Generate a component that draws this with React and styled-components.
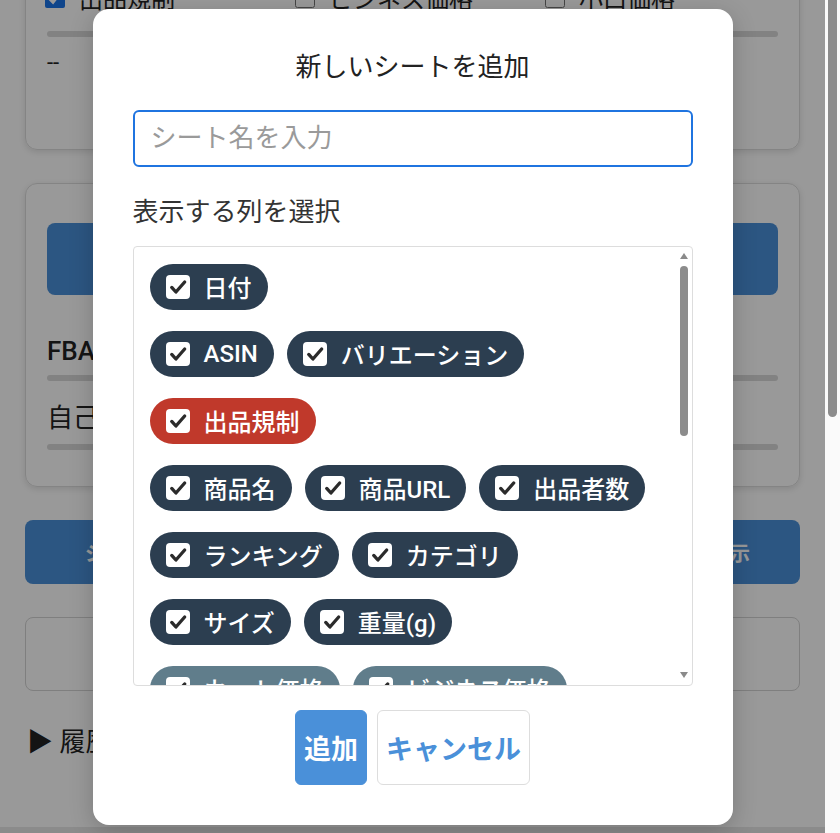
import styled, { createGlobalStyle } from "styled-components";

const GlobalStyle = createGlobalStyle`
  body {
    margin: 0;
    background: #fff;
    color: #222;
    font-family: Roboto, "Noto Sans CJK JP", "Noto Sans", sans-serif;
  }
`;

const Shell = styled.div`
  height: 100vh;
  display: flex;
  overflow: hidden;
`;

const Viewport = styled.div`
  flex: 1;
  position: relative;
  overflow: hidden;
`;

const PageScrollTrack = styled.div`
  width: 15px;
  flex-shrink: 0;
  background: #fafafa;
  padding: 0 3px;
  box-sizing: border-box;
`;

const PageScrollThumb = styled.div`
  height: 417px;
  background: #8c8c8c;
  border-radius: 0 0 5px 5px;
`;

const Page = styled.div`
  margin-top: -41px;
  padding: 0 25px;
  display: flex;
  flex-direction: column;
  gap: 33px;
`;

const Card = styled.section`
  border: 1px solid #dcdcdc;
  border-radius: 12px;
  box-shadow: 0 2px 6px rgba(0, 0, 0, 0.12);
  padding: ${(p) => p.$pad};
`;

const CheckGrid = styled.div`
  display: grid;
  grid-template-columns: repeat(3, 250px);
  height: 34px;
  align-items: center;
  margin-left: -2px;
`;

const CheckOption = styled.label`
  display: flex;
  align-items: center;
  gap: 14px;
  font-size: 24px;
  input {
    width: 20px;
    height: 20px;
    margin: 0;
    accent-color: #1a73e8;
  }
`;

const Bar = styled.div`
  height: 6px;
  border-radius: 3px;
  background: #d9d9d9;
  margin-top: ${(p) => p.$top}px;
`;

const Value = styled.div`
  margin-top: 10px;
  font-size: 22px;
  line-height: 31px;
`;

const PrimaryWide = styled.button`
  width: 100%;
  height: ${(p) => p.$h}px;
  border: none;
  border-radius: 8px;
  background: #4a90d9;
  color: #fff;
  font-family: inherit;
  font-size: 20px;
  font-weight: 700;
`;

const FieldLabel = styled.div`
  margin-top: ${(p) => p.$top}px;
  font-size: 26px;
  line-height: 31px;
  font-weight: ${(p) => (p.$bold ? 500 : 400)};
`;

const ButtonRow = styled.div`
  display: flex;
  gap: 16px;
`;

const EmptyBox = styled.div`
  height: 74px;
  border: 1px solid #d4d4d4;
  border-radius: 8px;
  box-sizing: border-box;
`;

const HistoryToggle = styled.div`
  padding: 0 0 34px 2px;
  font-size: 26px;
  line-height: 36px;
`;

const Footer = styled.footer`
  height: 60px;
  margin: 0 -25px;
  background: #e8e8e8;
  padding-top: 3px;
  display: flex;
  justify-content: center;
  gap: 24px;
  font-size: 17px;
  color: #333;
`;

const Overlay = styled.div`
  position: absolute;
  inset: 0;
  background: rgba(0, 0, 0, 0.4);
  display: flex;
  align-items: center;
  justify-content: center;
`;

const Dialog = styled.div`
  width: 640px;
  height: 816px;
  box-sizing: border-box;
  padding: 40px;
  background: #fff;
  border-radius: 16px;
  box-shadow: 0 6px 24px rgba(0, 0, 0, 0.2);
  display: flex;
  flex-direction: column;
`;

const Title = styled.h2`
  margin: 0 0 25px;
  text-align: center;
  font-size: 26px;
  line-height: 36px;
  font-weight: 400;
  color: #222;
`;

const NameInput = styled.input`
  height: 57px;
  box-sizing: border-box;
  border: 2px solid #1f74e0;
  border-radius: 6px;
  padding: 0 16px;
  font-family: inherit;
  font-size: 26px;
  color: #222;
  outline: none;
  &::placeholder {
    color: #9a9a9a;
  }
`;

const SectionLabel = styled.div`
  margin: 27px 0 16px;
  font-size: 26px;
  line-height: 36px;
  color: #333;
`;

const ColumnList = styled.div`
  height: 440px;
  box-sizing: border-box;
  border: 1px solid #dddddd;
  border-radius: 4px;
  display: flex;
`;

const ListContent = styled.div`
  flex: 1;
  overflow: hidden;
  padding: 17px 16px;
  display: flex;
  flex-direction: column;
  gap: 21px;
`;

const ListScrollbar = styled.div`
  width: 15px;
  flex-shrink: 0;
  display: flex;
  flex-direction: column;
  align-items: center;
  padding: 6px 0 7px;
  box-sizing: border-box;
`;

const Arrow = styled.span`
  width: 0;
  height: 0;
  border-left: 4.5px solid transparent;
  border-right: 4.5px solid transparent;
  ${(p) =>
    p.$down
      ? "border-top: 6px solid #8a8a8a; margin-top: auto;"
      : "border-bottom: 6px solid #8a8a8a;"}
`;

const ListThumb = styled.div`
  width: 8px;
  height: 170px;
  margin-top: 7px;
  border-radius: 4px;
  background: #8c8c8c;
`;

const Group = styled.div`
  display: flex;
  flex-wrap: wrap;
  gap: 21px 13px;
`;

const tones = {
  navy: "#2c3e50",
  red: "#c0392b",
  slate: "#607d8b",
  green: "#2e8b57",
  purple: "#7d4a9e",
  orange: "#d35400",
};

const Chip = styled.label`
  display: inline-flex;
  align-items: center;
  gap: 14px;
  height: 46px;
  padding: 0 16px;
  border-radius: 23px;
  background: ${(p) => tones[p.$tone]};
  color: #fff;
  font-size: 24px;
  font-weight: 500;
  white-space: nowrap;
  flex-shrink: 0;
`;

const Tick = styled.span`
  width: 24px;
  height: 24px;
  border-radius: 4px;
  background: #fff;
  display: inline-flex;
  align-items: center;
  justify-content: center;
`;

const Actions = styled.div`
  margin-top: 24px;
  display: flex;
  justify-content: center;
  gap: 10px;
`;

const ActionButton = styled.button`
  height: 75px;
  padding: 0 8px;
  border-radius: 6px;
  font-family: inherit;
  font-size: 27px;
  font-weight: 700;
  border: 1px solid ${(p) => (p.$primary ? "#4a90d9" : "#dddddd")};
  background: ${(p) => (p.$primary ? "#4a90d9" : "#fff")};
  color: ${(p) => (p.$primary ? "#fff" : "#4a90d9")};
`;

const groups = [
  { tone: "navy", items: ["日付"] },
  { tone: "navy", items: ["ASIN", "バリエーション"] },
  { tone: "red", items: ["出品規制"] },
  { tone: "navy", items: ["商品名", "商品URL", "出品者数"] },
  { tone: "navy", items: ["ランキング", "カテゴリ"] },
  { tone: "navy", items: ["サイズ", "重量(g)"] },
  { tone: "slate", items: ["カート価格", "ビジネス価格"] },
  { tone: "slate", items: ["小口価格", "最安値"] },
  { tone: "green", items: ["FBA手数料", "販売手数料"] },
  { tone: "green", items: ["自己発送送料", "仕入価格"] },
  { tone: "green", items: ["利益", "利益率"] },
  { tone: "orange", items: ["Keepa", "メモ"] },
  { tone: "purple", items: ["JAN", "型番"] },
  { tone: "purple", items: ["メーカー", "ブランド"] },
  { tone: "navy", items: ["画像URL"] },
];

function CheckMark() {
  return (
    <svg width="20" height="20" viewBox="0 0 24 24" fill="none">
      <path
        d="M4.5 12.5l5 5.5L20 6"
        stroke="#2b2b2b"
        strokeWidth="4"
        strokeLinecap="round"
        strokeLinejoin="round"
      />
    </svg>
  );
}

export default function App() {
  return (
    <>
      <GlobalStyle />
      <Shell>
        <Viewport>
          <Page>
            <Card $pad="20px 21px 71px">
              <CheckGrid>
                <CheckOption>
                  <input type="checkbox" defaultChecked />
                  出品規制
                </CheckOption>
                <CheckOption>
                  <input type="checkbox" />
                  ビジネス価格
                </CheckOption>
                <CheckOption>
                  <input type="checkbox" />
                  小口価格
                </CheckOption>
              </CheckGrid>
              <Bar $top={17} />
              <Value>--</Value>
            </Card>

            <Card $pad="39px 21px 36px">
              <PrimaryWide $h={72}>データを取得</PrimaryWide>
              <FieldLabel $top={41} $bold>
                FBA手数料
              </FieldLabel>
              <Bar $top={8} />
              <FieldLabel $top={22}>自己発送送料</FieldLabel>
              <Bar $top={10} />
            </Card>

            <ButtonRow>
              <PrimaryWide $h={64}>シートのデータを一括で取得</PrimaryWide>
              <PrimaryWide $h={64}>スプレッドシートを開いて表示</PrimaryWide>
            </ButtonRow>

            <EmptyBox />

            <HistoryToggle>▶ 履歴を表示</HistoryToggle>

            <Footer>
              <span>設定</span>
              <span>ライセンス確認</span>
              <span>マニュアル</span>
              <span>補足について</span>
            </Footer>
          </Page>

          <Overlay>
            <Dialog>
              <Title>新しいシートを追加</Title>
              <NameInput placeholder="シート名を入力" />
              <SectionLabel>表示する列を選択</SectionLabel>
              <ColumnList>
                <ListContent>
                  {groups.map((g, i) => (
                    <Group key={i}>
                      {g.items.map((name) => (
                        <Chip key={name} $tone={g.tone}>
                          <Tick>
                            <CheckMark />
                          </Tick>
                          {name}
                        </Chip>
                      ))}
                    </Group>
                  ))}
                </ListContent>
                <ListScrollbar>
                  <Arrow />
                  <ListThumb />
                  <Arrow $down />
                </ListScrollbar>
              </ColumnList>
              <Actions>
                <ActionButton $primary>追加</ActionButton>
                <ActionButton>キャンセル</ActionButton>
              </Actions>
            </Dialog>
          </Overlay>
        </Viewport>
        <PageScrollTrack>
          <PageScrollThumb />
        </PageScrollTrack>
      </Shell>
    </>
  );
}
